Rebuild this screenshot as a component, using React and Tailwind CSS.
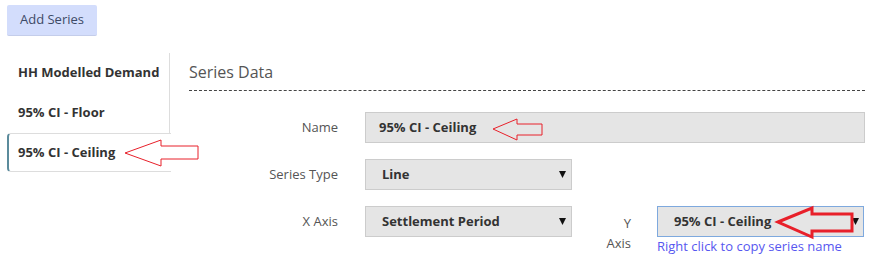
import React from 'react';

const tabs = ['HH Modelled Demand', '95% CI - Floor', '95% CI - Ceiling'];

const Caret = () => (
  <svg width="7" height="7" viewBox="0 0 7 7" className="shrink-0">
    <path d="M0 0 H7 L3.5 7 Z" fill="#111" />
  </svg>
);

const Select = ({ value, className = '' }) => (
  <div className={`h-[31px] flex items-center justify-between pl-[16px] pr-[5px] bg-[#e5e5e5] border border-[#cccccc] ${className}`}>
    <span className="font-bold text-[13px] text-[#333]">{value}</span>
    <Caret />
  </div>
);

const App = () => {
  const active = 2;

  return (
    <div className="relative w-[870px] h-[265px] bg-white overflow-hidden" style={{ fontFamily: '"Open Sans", "Liberation Sans", sans-serif' }}>
      <div className="pt-[5px] pl-[7px]">
        <button className="h-[31px] w-[90px] rounded-[2px] bg-[#d3ddfc] border-b border-[#c4cdea] text-[13px] text-[#3d4a66]">
          Add Series
        </button>
      </div>

      <div className="flex pl-[7px] mt-[17px]">
        {/* tab list */}
        <div className="w-[163px] shrink-0">
          <div className="border-r border-[#dddddd]">
            {tabs.slice(0, 2).map(t => (
              <div key={t} className="h-[40px] flex items-center pl-[11px] font-bold text-[13px] text-[#333]">{t}</div>
            ))}
          </div>
          <div className="h-[39px] -mr-px flex items-center pl-[9px] bg-white border-l-2 border-y border-l-[#5b8b9c] border-y-[#dddddd] rounded-l-[4px] font-bold text-[13px] text-[#333]">
            {tabs[active]}
          </div>
        </div>

        {/* series data */}
        <div className="flex-1 pl-[19px] pr-[5px]">
          <div className="mt-[7px] pb-[6px] border-b border-dashed border-[#444]">
            <div className="h-6 leading-6 text-[16px] text-[#555]">Series Data</div>
          </div>

          <div className="mt-[21px] flex flex-col gap-[16px] text-[13px]">
            <div className="flex items-center">
              <div className="w-[149px] text-right text-[#555]">Name</div>
              <div className="ml-[27px] flex-1 h-[31px] flex items-center pl-[13px] bg-[#e5e5e5] border border-[#cccccc] font-bold text-[#333]">
                95% CI - Ceiling
              </div>
            </div>

            <div className="flex items-center">
              <div className="w-[149px] text-right text-[#555]">Series Type</div>
              <Select value="Line" className="ml-[27px] w-[207px]" />
            </div>

            <div className="flex items-start">
              <div className="w-[149px] h-[31px] flex items-center justify-end text-[#555]">X Axis</div>
              <Select value="Settlement Period" className="ml-[27px] w-[207px]" />
              <div className="ml-[27px] w-[32px] pt-[7px] text-right leading-[20px] text-[#555]">Y Axis</div>
              <div className="ml-[26px] w-[207px] flex flex-col">
                <div className="h-[31px] flex items-center justify-between pl-[16px] pr-[4px] bg-[#e5e5e5] border border-[#7ea9de]">
                  <span className="font-bold text-[13px] text-[#333]">95% CI - Ceiling</span>
                  <Caret />
                </div>
                <div className="leading-[18px] text-[#5757f0] whitespace-nowrap">Right click to copy series name</div>
              </div>
            </div>
          </div>
        </div>
      </div>

      {/* red annotation arrows */}
      <svg className="absolute inset-0 pointer-events-none" width="870" height="265">
        <polygon points="125,153 161,140 161,146 198,146 198,159 161,159 161,166" fill="none" stroke="#e8202a" strokeWidth="1" />
        <polygon points="493,129 517,119 517,124 542,124 542,135 517,135 517,140" fill="none" stroke="#e8202a" strokeWidth="1" />
        <polygon points="778,222 812,208 812,214 852,214 852,231 812,231 812,237" fill="none" stroke="#e8202a" strokeWidth="3" strokeLinejoin="miter" />
      </svg>
    </div>
  );
};

export default App;
